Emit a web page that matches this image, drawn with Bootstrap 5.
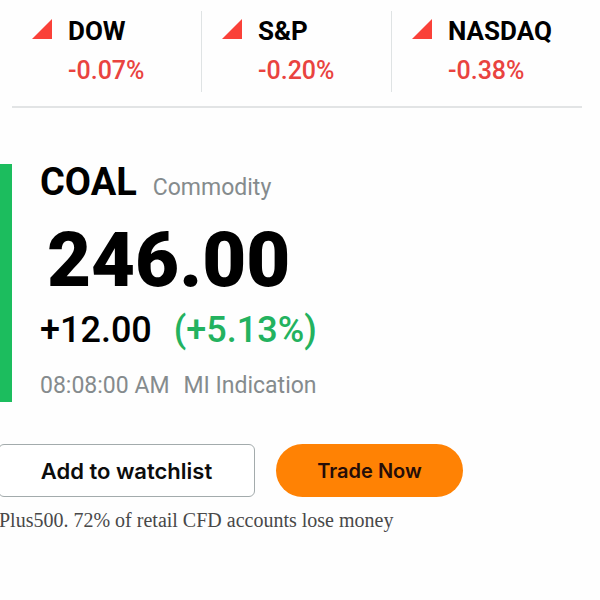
<!DOCTYPE html>
<html lang="en">
<head>
<meta charset="utf-8">
<meta name="viewport" content="width=device-width, initial-scale=1">
<title>Coal – Commodity</title>
<link href="https://cdn.jsdelivr.net/npm/bootstrap@5.3.0/dist/css/bootstrap.min.css" rel="stylesheet">
<style>
body { font-family: Roboto, "Liberation Sans", sans-serif; background: #fefefe; color: #000; }
.markets { margin: 0 18px 0 12px; padding: 11px 0 14px; border-bottom: 2px solid #e2e4e5; }
.market { min-height: 81px; padding-left: 20px; gap: 16px; border-right: 1px solid #dfe3e4; }
.market:last-child { border-right: 0; }
.market svg { width: 20px; height: 20px; margin-top: 8px; }
.market-name { font-size: 26px; line-height: 40px; font-weight: 700; }
.market-change { font-size: 25px; line-height: 40px; font-weight: 500; color: #e9433f; }
.quote { margin-top: 56px; border-left: 12px solid #1cbd5e; padding: 0 28px; }
.quote-name { font-size: 38px; line-height: 36px; font-weight: 700; }
.muted { font-size: 23px; line-height: 28px; color: #858b8d; }
.price { font-size: 76px; line-height: 80px; font-weight: 900; padding: 18px 0 0 7px; }
.change { font-size: 36px; line-height: 44px; font-weight: 500; margin-top: 8px; gap: 22px; }
.gain { color: #23b25f; }
.stamp { margin-top: 20px; gap: 14px; padding-bottom: 2px; }
.actions { margin: 42px 0 0 -2px; gap: 21px; }
.action { height: 53px; font-family: Inter, sans-serif; font-weight: 600; --bs-btn-color: #0c0c0c; }
.watch { width: 257px; font-size: 22px; line-height: 28px; border-color: #a3abac; border-radius: 6px; background: #fff; }
.trade { width: 187px; font-size: 20px; line-height: 28px; background: #ff8204; --bs-btn-color: #260d08; border: 0; }
.legal { margin: 10px 0 0 -1px; font-family: "Liberation Serif", serif; font-size: 20px; line-height: 26px; color: #484848; }
</style>
<script src="https://cdn.jsdelivr.net/npm/bootstrap@5.3.0/dist/js/bootstrap.bundle.min.js"></script>
</head>
<body class="overflow-x-hidden">
<header class="markets">
  <div class="row g-0">
    <div class="col-4 market d-flex align-items-start">
      <svg viewBox="0 0 20 20" aria-hidden="true"><path fill="#fa4139" d="M20 0v20H0z"/></svg>
      <div><div class="market-name">DOW</div><div class="market-change">-0.07%</div></div>
    </div>
    <div class="col-4 market d-flex align-items-start">
      <svg viewBox="0 0 20 20" aria-hidden="true"><path fill="#fa4139" d="M20 0v20H0z"/></svg>
      <div><div class="market-name">S&amp;P</div><div class="market-change">-0.20%</div></div>
    </div>
    <div class="col-4 market d-flex align-items-start">
      <svg viewBox="0 0 20 20" aria-hidden="true"><path fill="#fa4139" d="M20 0v20H0z"/></svg>
      <div><div class="market-name">NASDAQ</div><div class="market-change">-0.38%</div></div>
    </div>
  </div>
</header>
<main>
  <section class="quote">
    <div class="d-flex align-items-baseline gap-3">
      <h1 class="quote-name mb-0">COAL</h1><span class="muted">Commodity</span>
    </div>
    <div class="price">246.00</div>
    <div class="change d-flex"><span>+12.00</span><span class="gain">(+5.13%)</span></div>
    <div class="stamp muted d-flex"><span>08:08:00 AM</span><span>MI Indication</span></div>
  </section>
  <div class="actions d-flex">
    <button type="button" class="btn action watch text-nowrap">Add to watchlist</button>
    <button type="button" class="btn action trade rounded-pill text-nowrap">Trade Now</button>
  </div>
  <p class="legal">Plus500. 72% of retail CFD accounts lose money</p>
</main>
</body>
</html>
